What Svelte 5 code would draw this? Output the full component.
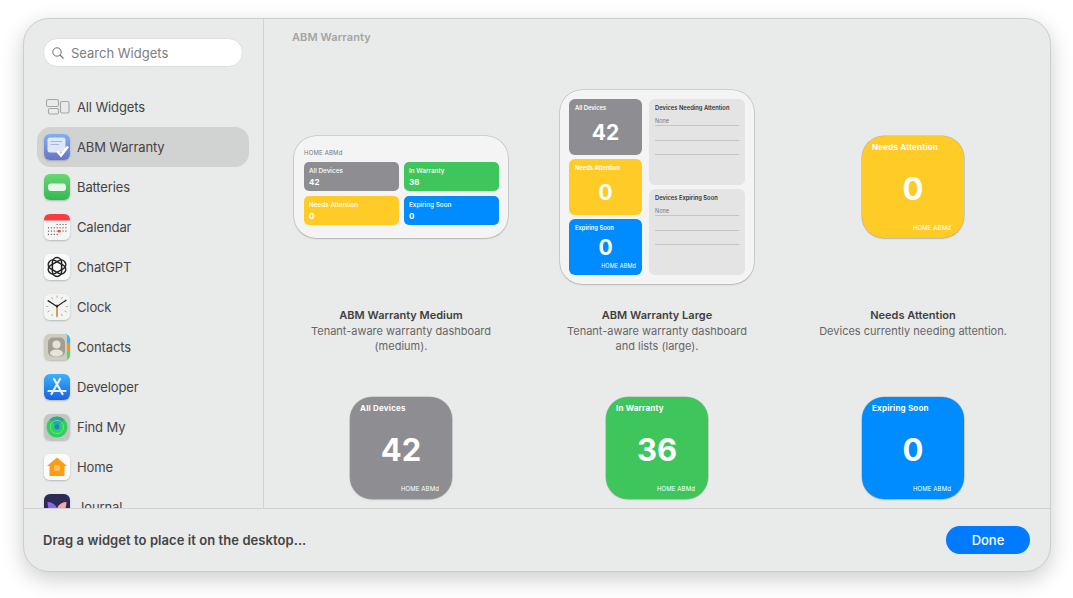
<script lang="ts">
  const apps = [
    { id: "all", name: "All Widgets" },
    { id: "abm", name: "ABM Warranty", selected: true },
    { id: "batteries", name: "Batteries" },
    { id: "calendar", name: "Calendar" },
    { id: "chatgpt", name: "ChatGPT" },
    { id: "clock", name: "Clock" },
    { id: "contacts", name: "Contacts" },
    { id: "developer", name: "Developer" },
    { id: "findmy", name: "Find My" },
    { id: "home", name: "Home" },
    { id: "journal", name: "Journal" },
  ];

  const stats = {
    all: { label: "All Devices", value: 42, color: "gray" },
    warranty: { label: "In Warranty", value: 36, color: "green" },
    attention: { label: "Needs Attention", value: 0, color: "yellow" },
    expiring: { label: "Expiring Soon", value: 0, color: "blue" },
  };
  const mediumTiles = [stats.all, stats.warranty, stats.attention, stats.expiring];
  const largeTiles = [stats.all, stats.attention, stats.expiring];
  const lists = ["Devices Needing Attention", "Devices Expiring Soon"];

  const calendarDots: [number, number][] = [];
  for (let r = 0; r < 4; r++) {
    for (let c = 0; c < 7; c++) {
      if ((r === 0 && c < 3) || (r === 3 && c > 3)) continue;
      calendarDots.push([4.5 + c * 2.9, 10.5 + r * 3.3]);
    }
  }
  const hours = [0, 30, 60, 90, 120, 150, 180, 210, 240, 270, 300, 330];
</script>

{#snippet icon(id: string)}
  <svg class="app-svg" viewBox="0 0 26 26" aria-hidden="true">
    {#if id === "all"}
      <g fill="none" stroke="#a6a6a6" stroke-width="1.1">
        <rect x="2.5" y="5.5" width="12" height="7" rx="1.6" />
        <rect x="4.5" y="14.5" width="10" height="5.5" rx="1.6" />
        <rect x="16.5" y="7.5" width="8.5" height="11.5" rx="1.6" />
      </g>
    {:else if id === "abm"}
      <defs>
        <linearGradient id="abm-bg" x1="0" y1="0" x2="0" y2="1">
          <stop offset="0" stop-color="#7fb0f5" />
          <stop offset="1" stop-color="#6775c4" />
        </linearGradient>
      </defs>
      <rect width="26" height="26" rx="6" fill="url(#abm-bg)" />
      <path d="M3.5 6Q3.5 3.5 6 3.5H19Q21.5 3.5 21.5 6V16Q21.5 18.5 19 18.5H6Q3.5 18.5 3.5 16Z" fill="#dfe6f6" />
      <path d="M6.5 7.5H18M6.5 10.5H15" stroke="#a9b6d8" stroke-width="1.1" fill="none" />
      <path d="M13 17L17 21.5L24 12.5" stroke="#fff" stroke-width="2.4" fill="none" />
    {:else if id === "batteries"}
      <defs>
        <linearGradient id="bat-bg" x1="0" y1="0" x2="0" y2="1">
          <stop offset="0" stop-color="#66d976" />
          <stop offset="1" stop-color="#32b953" />
        </linearGradient>
      </defs>
      <rect width="26" height="26" rx="6" fill="url(#bat-bg)" />
      <rect x="4" y="9.5" width="18" height="7.5" rx="3" fill="#e9f8ea" />
    {:else if id === "calendar"}
      <rect width="26" height="26" rx="6" fill="#f6f6f6" />
      <path d="M0 6.5V6Q0 0 6 0H20Q26 0 26 6V6.5Z" fill="#fa3c41" />
      {#each calendarDots as [x, y]}
        <rect x={x - 0.55} y={y - 0.55} width="1.1" height="1.1" fill="#55555a" />
      {/each}
      <rect x="14" y="16" width="2.4" height="2.4" fill="#f24545" />
    {:else if id === "chatgpt"}
      <rect width="26" height="26" rx="6" fill="#fafafa" />
      <g fill="none" stroke="#222" stroke-width="1.5" transform="translate(13 13)">
        <rect x="-4.6" y="-9.4" width="9.2" height="18.8" rx="4.6" />
        <rect x="-4.6" y="-9.4" width="9.2" height="18.8" rx="4.6" transform="rotate(60)" />
        <rect x="-4.6" y="-9.4" width="9.2" height="18.8" rx="4.6" transform="rotate(120)" />
      </g>
    {:else if id === "clock"}
      <rect width="26" height="26" rx="6" fill="#f4f4f2" />
      <g transform="translate(13 12.5)">
        {#each hours as a}
          <line y1="-11" y2="-8.6" stroke="#a5a5a5" stroke-width="0.8" transform="rotate({a})" />
        {/each}
        <line y1="-2" y2="10" stroke="#c98f3e" stroke-width="1.6" />
        <line y2="-11" stroke="#1d1d1d" stroke-width="1.3" transform="rotate(-57)" />
        <line y2="-11.5" stroke="#1d1d1d" stroke-width="1.1" transform="rotate(55)" />
        <circle r="1.1" fill="#1d1d1d" />
      </g>
    {:else if id === "contacts"}
      <rect width="26" height="26" rx="6" fill="#cfcdbf" />
      <path d="M23 0H20Q26 0 26 6V9H23Z" fill="#35b6f5" />
      <rect x="23" y="9" width="3" height="8" fill="#f7941d" />
      <path d="M23 17H26V20Q26 26 20 26H23Z" fill="#4dd964" />
      <rect x="4" y="3.5" width="17" height="19" rx="5" fill="#a39d93" />
      <circle cx="12.5" cy="10.5" r="4" fill="#e6e3dc" />
      <ellipse cx="12.5" cy="19" rx="6.5" ry="3.6" fill="#e6e3dc" />
    {:else if id === "developer"}
      <defs>
        <linearGradient id="dev-bg" x1="0" y1="0" x2="0" y2="1">
          <stop offset="0" stop-color="#37b4fb" />
          <stop offset="1" stop-color="#1d5fe0" />
        </linearGradient>
      </defs>
      <rect width="26" height="26" rx="6" fill="url(#dev-bg)" />
      <path d="M10 5L18.5 20M16 5L7.5 20M4.5 17H21.5" stroke="#e8f2fd" stroke-width="2.2" stroke-linecap="round" fill="none" />
    {:else if id === "findmy"}
      <rect width="26" height="26" rx="6" fill="#c4c5c3" />
      <circle cx="13" cy="13" r="10.5" fill="#2fd05b" />
      <path d="M13 13L5.6 5.6A10.5 10.5 0 0 1 20.4 5.6Z" fill="#2aa99a" />
      <circle cx="13" cy="13" r="6.6" fill="none" stroke="#7de596" stroke-width="0.8" />
      <circle cx="13" cy="13" r="2.5" fill="#1f7fe0" />
    {:else if id === "home"}
      <rect width="26" height="26" rx="6" fill="#fbfbfb" />
      <path d="M13 3.5L23 12H20.5V21Q20.5 22 19.5 22H6.5Q5.5 22 5.5 21V12H3Z" fill="#fd9c17" />
      <rect x="10" y="11" width="6" height="6" rx="2" fill="#ffc35c" />
    {:else if id === "journal"}
      <rect width="26" height="26" rx="6" fill="#2b2b55" />
      <path d="M12.5 22C8 21 4 18 3.5 8Q9 8 12.5 13Z" fill="#8a68ea" />
      <path d="M13.5 22C18 21 22 18 22.5 8Q17 8 13.5 13Z" fill="#f7a8a4" />
    {/if}
  </svg>
{/snippet}

{#snippet footerTag()}
  <span class="tag">HOME ABMd</span>
{/snippet}

{#snippet small(s: { label: string; value: number; color: string })}
  <div class="widget small {s.color}">
    <span class="small-label">{s.label}</span>
    <span class="small-value">{s.value}</span>
    {@render footerTag()}
  </div>
{/snippet}

<div class="page">
  <div class="window">
    <div class="main">
      <aside class="sidebar">
        <div class="search">
          <svg class="search-icon" viewBox="0 0 12 12" aria-hidden="true">
            <circle cx="5" cy="5" r="4.2" fill="none" stroke="#707070" stroke-width="1" />
            <line x1="8" y1="8" x2="11.5" y2="11.5" stroke="#707070" stroke-width="1.1" />
          </svg>
          <span>Search Widgets</span>
        </div>
        <ul class="apps">
          {#each apps as app}
            <li class:selected={app.selected}>
              <span class="app-icon" class:plain={app.id === "all"}>{@render icon(app.id)}</span>
              <span>{app.name}</span>
            </li>
          {/each}
        </ul>
      </aside>

      <section class="content">
        <h2>ABM Warranty</h2>
        <div class="grid">
          <div class="cell">
            <div class="preview">
              <div class="widget medium">
                <span class="medium-tag">HOME ABMd</span>
                <div class="medium-tiles">
                  {#each mediumTiles as s}
                    <div class="medium-tile {s.color}">
                      <span>{s.label}</span>
                      <b>{s.value}</b>
                    </div>
                  {/each}
                </div>
              </div>
            </div>
            <h3>ABM Warranty Medium</h3>
            <p>Tenant-aware warranty dashboard<br />(medium).</p>
          </div>

          <div class="cell">
            <div class="preview">
              <div class="widget large">
                <div class="large-tiles">
                  {#each largeTiles as s, i}
                    <div class="large-tile {s.color}">
                      <span class="large-label">{s.label}</span>
                      <b>{s.value}</b>
                      {#if i === 2}{@render footerTag()}{/if}
                    </div>
                  {/each}
                </div>
                <div class="large-lists">
                  {#each lists as title}
                    <div class="list">
                      <strong>{title}</strong>
                      <span>None</span>
                      <i></i><i></i><i></i>
                    </div>
                  {/each}
                </div>
              </div>
            </div>
            <h3>ABM Warranty Large</h3>
            <p>Tenant-aware warranty dashboard<br />and lists (large).</p>
          </div>

          <div class="cell">
            <div class="preview">{@render small(stats.attention)}</div>
            <h3>Needs Attention</h3>
            <p>Devices currently needing attention.</p>
          </div>

          <div class="cell">
            <div class="preview">{@render small(stats.all)}</div>
          </div>
          <div class="cell">
            <div class="preview">{@render small(stats.warranty)}</div>
          </div>
          <div class="cell">
            <div class="preview">{@render small(stats.expiring)}</div>
          </div>
        </div>
      </section>
    </div>

    <footer>
      <span class="hint">Drag a widget to place it on the desktop...</span>
      <button>Done</button>
    </footer>
  </div>
</div>

<style>
  :global(body) {
    background: #fff;
    font-family: Inter, "Liberation Sans", sans-serif;
  }

  /* full window height so the window's shadow isn't cut at the page end */
  .page {
    box-sizing: border-box;
    height: 598px;
    padding: 18px 0 0 23px;
    overflow: hidden;
  }

  .window {
    box-sizing: border-box;
    width: 1028px;
    height: 554px;
    display: flex;
    flex-direction: column;
    background: #e9eaea;
    border: 1px solid #cdcdcd;
    border-radius: 26px;
    box-shadow: 0 7px 22px rgba(0, 0, 0, 0.2);
    overflow: hidden;
  }

  .main {
    flex: 1;
    display: flex;
    min-height: 0;
  }

  .sidebar {
    box-sizing: border-box;
    width: 240px;
    flex: none;
    border-right: 1px solid #d2d2d2;
    padding: 19px 14px 0 13px;
    overflow: hidden;
  }

  .search {
    box-sizing: border-box;
    width: 200px;
    height: 29px;
    margin: 0 0 20px 6px;
    padding-left: 8px;
    display: flex;
    align-items: center;
    gap: 7px;
    background: #fff;
    border: 1px solid #dedede;
    border-radius: 15px;
    color: #7e7e7e;
    font-size: 13px;
  }

  .search-icon {
    width: 12px;
    height: 12px;
  }

  .apps {
    list-style: none;
    margin: 0;
    padding: 0;
  }

  .apps li {
    height: 40px;
    display: flex;
    align-items: center;
    gap: 7px;
    padding-left: 7px;
    border-radius: 14px;
    color: #444;
    font-size: 13px;
    letter-spacing: -0.01em;
  }

  .apps li.selected {
    background: #d1d2d2;
  }

  .app-icon {
    width: 26px;
    height: 26px;
    flex: none;
    border-radius: 6px;
    box-shadow: 0 1px 2px rgba(0, 0, 0, 0.22);
  }

  .app-icon.plain {
    box-shadow: none;
  }

  .app-svg {
    display: block;
    width: 26px;
    height: 26px;
  }

  .content {
    flex: 1;
    min-width: 0;
    padding-left: 9px;
    overflow: hidden;
  }

  h2 {
    margin: 11px 0 0 19px;
    height: 15px;
    font-size: 11px;
    line-height: 15px;
    font-weight: 600;
    letter-spacing: 0.01em;
    color: #a4a4a4;
  }

  .grid {
    margin-top: 45px;
    display: grid;
    grid-template-columns: repeat(3, 256px);
    grid-auto-rows: 261px;
  }

  .cell {
    text-align: center;
  }

  .preview {
    height: 194px;
    margin-bottom: 24px;
    display: flex;
    align-items: center;
    justify-content: center;
  }

  h3 {
    margin: 0;
    font-size: 11px;
    line-height: 15px;
    font-weight: 600;
    color: #3f3f3f;
  }

  .cell p {
    margin: 1px 0 0;
    font-size: 11px;
    line-height: 15px;
    color: #666;
  }

  .widget {
    box-sizing: border-box;
    flex: none;
    border-radius: 22px;
    box-shadow: 0 0 0 0.5px rgba(0, 0, 0, 0.22), 0 1px 2px rgba(0, 0, 0, 0.12);
    text-align: left;
  }

  .gray { background: #8e8d92; }
  .green { background: #3ec65c; }
  .yellow { background: #ffcb27; }
  .blue { background: #008cff; }

  .small {
    position: relative;
    width: 102px;
    height: 102px;
    padding: 6px 10px 0;
    color: #fff;
    display: flex;
    flex-direction: column;
  }

  .small-label {
    font-size: 8px;
    line-height: 10px;
    font-weight: 700;
    letter-spacing: 0.025em;
  }

  .small-value {
    margin-top: 17px;
    text-align: center;
    font-size: 31px;
    line-height: 40px;
    font-weight: 700;
  }

  .tag {
    position: absolute;
    right: 13px;
    bottom: 6px;
    color: #fff;
    font-size: 6px;
    line-height: 8px;
    font-weight: 400;
    letter-spacing: 0.02em;
  }

  .medium {
    width: 214px;
    height: 102px;
    padding: 13px 10px 0;
    background: #f4f4f4;
  }

  .medium-tag {
    display: block;
    height: 13px;
    font-size: 6px;
    line-height: 8px;
    letter-spacing: 0.03em;
    color: #777;
  }

  .medium-tiles {
    display: grid;
    grid-template-columns: 95px 95px;
    grid-auto-rows: 29px;
    gap: 5px;
  }

  .medium-tile {
    padding: 5px 5px 0;
    border-radius: 5px;
    color: #fff;
    display: flex;
    flex-direction: column;
    font-size: 6.4px;
    line-height: 8px;
    font-weight: 500;
  }

  .medium-tile b {
    margin-top: 2px;
    font-size: 8px;
    line-height: 10px;
    font-weight: 700;
  }

  .large {
    width: 194px;
    height: 194px;
    padding: 9px;
    display: flex;
    gap: 7px;
    background: #f4f4f4;
  }

  .large-tiles {
    width: 73px;
    flex: none;
    display: flex;
    flex-direction: column;
    gap: 4px;
  }

  .large-tile {
    position: relative;
    height: 56px;
    padding: 5px 6px 0;
    border-radius: 6px;
    color: #fff;
    display: flex;
    flex-direction: column;
  }

  .large-tile .tag {
    right: 6px;
    bottom: 5px;
    font-size: 5.5px;
  }

  .large-label {
    font-size: 5.8px;
    line-height: 8px;
    font-weight: 600;
  }

  .large-tile b {
    margin-top: 9px;
    text-align: center;
    font-size: 21px;
    line-height: 24px;
    font-weight: 700;
  }

  .large-tile:last-child b {
    margin-top: 4px;
  }

  .large-lists {
    flex: 1;
    display: flex;
    flex-direction: column;
    gap: 4px;
  }

  .list {
    flex: 1;
    padding: 5px 6px 0;
    border-radius: 6px;
    background: #e4e4e4;
    display: flex;
    flex-direction: column;
  }

  .list strong {
    font-size: 5.8px;
    line-height: 8px;
    font-weight: 600;
    color: #333;
  }

  .list span {
    margin-top: 5px;
    font-size: 5.5px;
    line-height: 8px;
    color: #777;
  }

  .list i {
    display: block;
    height: 0;
    margin-bottom: 13.5px;
    border-top: 0.5px solid #c4c4c4;
  }

  footer {
    flex: none;
    height: 63px;
    box-sizing: border-box;
    border-top: 1px solid #d2d2d2;
    padding: 0 20px 0 19px;
    display: flex;
    align-items: center;
    justify-content: space-between;
  }

  .hint {
    font-size: 13px;
    font-weight: 600;
    letter-spacing: 0.005em;
    color: #444;
  }

  button {
    width: 84px;
    height: 28px;
    padding: 0;
    border: 0;
    border-radius: 14px;
    background: #007aff;
    color: #fff;
    font: 500 13px Inter, "Liberation Sans", sans-serif;
  }
</style>
